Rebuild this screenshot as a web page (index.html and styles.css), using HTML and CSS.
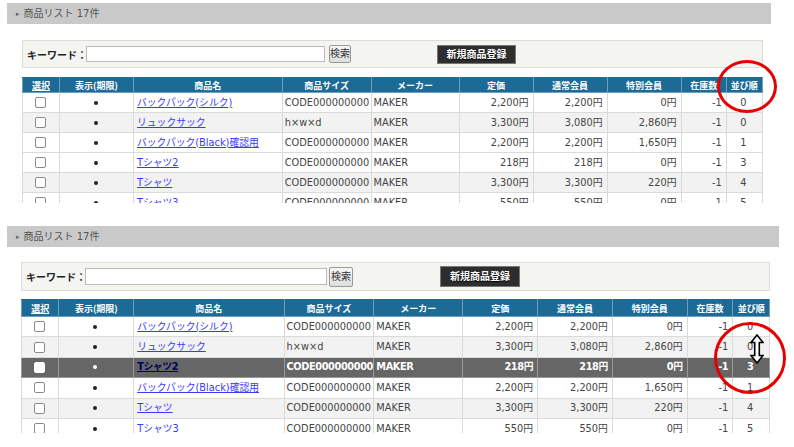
FILE: index.html
```html
<!DOCTYPE html>
<html lang="ja">
<head>
    <meta charset="UTF-8">
    <title>商品リスト</title>
    <link rel="stylesheet" href="styles.css">
</head>
<body>
    <div class="panel panel-a">
        <div class="panel-head"><span class="arrow">▸</span>商品リスト 17件</div>
        <div class="panel-body">
            <div class="search">
                <span class="kw-label">キーワード：</span>
                <span class="kw-input"></span>
                <span class="btn-search">検索</span>
                <span class="btn-new">新規商品登録</span>
            </div>
            <div class="list">
                <table>
                    <colgroup>
                        <col class="c-sel"><col class="c-show"><col class="c-name"><col class="c-size"><col class="c-maker">
                        <col class="c-price"><col class="c-price"><col class="c-price"><col class="c-stock"><col class="c-order">
                    </colgroup>
                    <thead>
                        <tr>
                            <th><u>選択</u></th><th>表示(期限)</th><th>商品名</th><th>商品サイズ</th><th>メーカー</th>
                            <th>定価</th><th>通常会員</th><th>特別会員</th><th>在庫数</th><th>並び順</th>
                        </tr>
                    </thead>
                    <tbody>
                        <tr>
                            <td class="ctr"><span class="check"></span></td><td class="ctr"><span class="dot"></span></td>
                            <td><a href="#">バックパック(シルク)</a></td><td>CODE000000000</td><td>MAKER</td>
                            <td class="num">2,200円</td><td class="num">2,200円</td><td class="num">0円</td><td class="num">-1</td><td class="ctr">0</td>
                        </tr>
                        <tr class="alt">
                            <td class="ctr"><span class="check"></span></td><td class="ctr"><span class="dot"></span></td>
                            <td><a href="#">リュックサック</a></td><td>h×w×d</td><td>MAKER</td>
                            <td class="num">3,300円</td><td class="num">3,080円</td><td class="num">2,860円</td><td class="num">-1</td><td class="ctr">0</td>
                        </tr>
                        <tr>
                            <td class="ctr"><span class="check"></span></td><td class="ctr"><span class="dot"></span></td>
                            <td><a href="#">バックパック(Black)確認用</a></td><td>CODE000000000</td><td>MAKER</td>
                            <td class="num">2,200円</td><td class="num">2,200円</td><td class="num">1,650円</td><td class="num">-1</td><td class="ctr">1</td>
                        </tr>
                        <tr>
                            <td class="ctr"><span class="check"></span></td><td class="ctr"><span class="dot"></span></td>
                            <td><a href="#">Tシャツ2</a></td><td>CODE000000000</td><td>MAKER</td>
                            <td class="num">218円</td><td class="num">218円</td><td class="num">0円</td><td class="num">-1</td><td class="ctr">3</td>
                        </tr>
                        <tr class="alt">
                            <td class="ctr"><span class="check"></span></td><td class="ctr"><span class="dot"></span></td>
                            <td><a href="#">Tシャツ</a></td><td>CODE000000000</td><td>MAKER</td>
                            <td class="num">3,300円</td><td class="num">3,300円</td><td class="num">220円</td><td class="num">-1</td><td class="ctr">4</td>
                        </tr>
                        <tr>
                            <td class="ctr"><span class="check"></span></td><td class="ctr"><span class="dot"></span></td>
                            <td><a href="#">Tシャツ3</a></td><td>CODE000000000</td><td>MAKER</td>
                            <td class="num">550円</td><td class="num">550円</td><td class="num">0円</td><td class="num">-1</td><td class="ctr">5</td>
                        </tr>
                    </tbody>
                </table>
            </div>
        </div>
        <div class="mark mark-a"></div>
    </div>

    <div class="panel panel-b">
        <div class="panel-head"><span class="arrow">▸</span>商品リスト 17件</div>
        <div class="panel-body">
            <div class="search">
                <span class="kw-label">キーワード：</span>
                <span class="kw-input"></span>
                <span class="btn-search">検索</span>
                <span class="btn-new">新規商品登録</span>
            </div>
            <div class="list">
                <table>
                    <colgroup>
                        <col class="c-sel"><col class="c-show"><col class="c-name"><col class="c-size"><col class="c-maker">
                        <col class="c-price"><col class="c-price"><col class="c-price"><col class="c-stock"><col class="c-order">
                    </colgroup>
                    <thead>
                        <tr>
                            <th><u>選択</u></th><th>表示(期限)</th><th>商品名</th><th>商品サイズ</th><th>メーカー</th>
                            <th>定価</th><th>通常会員</th><th>特別会員</th><th>在庫数</th><th>並び順</th>
                        </tr>
                    </thead>
                    <tbody>
                        <tr>
                            <td class="ctr"><span class="check"></span></td><td class="ctr"><span class="dot"></span></td>
                            <td><a href="#">バックパック(シルク)</a></td><td>CODE000000000</td><td>MAKER</td>
                            <td class="num">2,200円</td><td class="num">2,200円</td><td class="num">0円</td><td class="num">-1</td><td class="ctr">0</td>
                        </tr>
                        <tr class="alt">
                            <td class="ctr"><span class="check"></span></td><td class="ctr"><span class="dot"></span></td>
                            <td><a href="#">リュックサック</a></td><td>h×w×d</td><td>MAKER</td>
                            <td class="num">3,300円</td><td class="num">3,080円</td><td class="num">2,860円</td><td class="num">-1</td><td class="ctr">0</td>
                        </tr>
                        <tr class="dragging">
                            <td class="ctr"><span class="check"></span></td><td class="ctr"><span class="dot"></span></td>
                            <td><a href="#">Tシャツ2</a></td><td>CODE000000000</td><td>MAKER</td>
                            <td class="num">218円</td><td class="num">218円</td><td class="num">0円</td><td class="num">-1</td><td class="ctr">3</td>
                        </tr>
                        <tr>
                            <td class="ctr"><span class="check"></span></td><td class="ctr"><span class="dot"></span></td>
                            <td><a href="#">バックパック(Black)確認用</a></td><td>CODE000000000</td><td>MAKER</td>
                            <td class="num">2,200円</td><td class="num">2,200円</td><td class="num">1,650円</td><td class="num">-1</td><td class="ctr">1</td>
                        </tr>
                        <tr class="alt">
                            <td class="ctr"><span class="check"></span></td><td class="ctr"><span class="dot"></span></td>
                            <td><a href="#">Tシャツ</a></td><td>CODE000000000</td><td>MAKER</td>
                            <td class="num">3,300円</td><td class="num">3,300円</td><td class="num">220円</td><td class="num">-1</td><td class="ctr">4</td>
                        </tr>
                        <tr>
                            <td class="ctr"><span class="check"></span></td><td class="ctr"><span class="dot"></span></td>
                            <td><a href="#">Tシャツ3</a></td><td>CODE000000000</td><td>MAKER</td>
                            <td class="num">550円</td><td class="num">550円</td><td class="num">0円</td><td class="num">-1</td><td class="ctr">5</td>
                        </tr>
                    </tbody>
                </table>
            </div>
        </div>
        <div class="mark mark-b"></div>
        <svg class="cursor" width="14" height="30" viewBox="0 0 14 30">
            <path d="M7 1 L13 8.5 L9.3 8.5 L9.3 21.5 L13 21.5 L7 29 L1 21.5 L4.7 21.5 L4.7 8.5 L1 8.5 Z" fill="#fff" stroke="#000" stroke-width="1.6" stroke-linejoin="miter"/>
        </svg>
    </div>
</body>
</html>
```

FILE: styles.css
```css
* {
    margin: 0;
    padding: 0;
    box-sizing: border-box;
}

body {
    font-family: 'DejaVu Sans', 'Noto Sans CJK JP', sans-serif;
    font-size: 10px;
    color: #444;
    background: #fff;
}

.panel {
    position: relative;
    margin-left: 7px;
}

.panel-a {
    width: 764px;
    margin-top: 3px;
}

.panel-b {
    width: 772px;
    margin-top: 23px;
}

.panel-head {
    height: 21px;
    line-height: 21px;
    background: #c9c9c9;
    color: #555;
    font-size: 10px;
    padding-left: 9px;
}

.arrow {
    font-size: 7px;
    color: #666;
    margin-right: 4px;
    vertical-align: 1px;
}

.panel-a .panel-body {
    padding: 16px 8px 0 15px;
}

.panel-b .panel-body {
    padding: 15px 9px 0 14px;
}

.search {
    display: flex;
    align-items: center;
    background: #f4f4f1;
    border: 1px solid #dcdcd8;
    padding-left: 4px;
}

.panel-a .search {
    height: 28px;
}

.panel-b .search {
    height: 29px;
}

.kw-label {
    font-family: 'Noto Sans CJK JP', sans-serif;
    font-size: 10px;
    font-weight: bold;
    color: #222;
    width: 59px;
    flex-shrink: 0;
    white-space: nowrap;
}

.kw-input {
    display: block;
    flex-shrink: 0;
    background: #fff;
    border: 1px solid #bbb;
}

.panel-a .kw-input {
    width: 239px;
    height: 16px;
}

.panel-b .kw-input {
    width: 242px;
    height: 17px;
}

.btn-search {
    display: block;
    flex-shrink: 0;
    margin-left: 4px;
    border: 1px solid #999;
    border-radius: 2px;
    background: linear-gradient(#f6f6f6, #dedede);
    color: #333;
    text-align: center;
    font-size: 10px;
}

.panel-a .btn-search {
    width: 22px;
    height: 18px;
    line-height: 16px;
}

.panel-b .btn-search {
    margin-left: 2px;
    width: 24px;
    height: 20px;
    line-height: 18px;
}

.btn-new {
    display: block;
    flex-shrink: 0;
    background: #2e2e2e;
    border: 1px solid #777;
    color: #fff;
    font-weight: bold;
    text-align: center;
    text-shadow: 0 1px 1px #000;
}

.panel-a .btn-new {
    margin-left: 86px;
    width: 79px;
    height: 19px;
    line-height: 17px;
}

.panel-b .btn-new {
    margin-left: 87px;
    width: 80px;
    height: 21px;
    line-height: 19px;
}

.list {
    overflow: hidden;
}

.panel-a .list {
    margin-top: 9px;
    height: 126px;
}

.panel-b .list {
    margin-top: 8px;
    height: 134px;
}

table {
    width: 100%;
    border-collapse: collapse;
    table-layout: fixed;
}

.c-sel { width: 5%; }
.c-show { width: 10%; }
.c-name { width: 20.1%; }
.c-size { width: 12%; }
.c-maker { width: 11.9%; }
.c-price { width: 10%; }
.c-stock { width: 6.1%; }
.c-order { width: 4.9%; }

th {
    background: #1c6b97;
    color: #fff;
    font-family: 'Noto Sans CJK JP', sans-serif;
    font-size: 9px;
    font-weight: bold;
    border: 1px solid #6e9fbd;
    border-top-color: #1c6b97;
    white-space: nowrap;
    overflow: hidden;
}

.panel-a th {
    height: 15px;
    line-height: 13px;
}

.panel-b th {
    height: 17px;
    line-height: 15px;
}

td {
    border: 1px solid #dadada;
    padding: 0 4px 0 2px;
    height: 20px;
    line-height: 18px;
    font-size: 9.8px;
    white-space: nowrap;
    overflow: hidden;
    background: #fff;
}

td:nth-child(3) {
    padding-left: 3px;
}

.panel-b td {
    height: 20.4px;
}

tr.alt td {
    background: #f2f2f2;
}

td a {
    color: #3a3aff;
}

.ctr {
    text-align: center;
}

.num {
    text-align: right;
}

.check {
    display: inline-block;
    width: 11px;
    height: 11px;
    border: 1px solid #8a8a8a;
    border-radius: 2px;
    background: #fff;
    vertical-align: middle;
}

.dot {
    display: inline-block;
    width: 4px;
    height: 4px;
    border-radius: 50%;
    background: #222;
    vertical-align: middle;
}

tr.dragging td {
    background: #666;
    color: #fff;
    font-weight: bold;
    letter-spacing: -0.4px;
    border-color: #999;
}

tr.dragging td a {
    color: #00005e;
}

tr.dragging .check {
    border-color: #fff;
}

tr.dragging .dot {
    background: #fff;
}

.mark {
    position: absolute;
    border: 3px solid #e60000;
    border-radius: 50%;
}

.mark-a {
    left: 710px;
    top: 57px;
    width: 60px;
    height: 53px;
}

.mark-b {
    left: 707px;
    top: 96px;
    width: 72px;
    height: 72px;
}

.cursor {
    position: absolute;
    left: 743px;
    top: 108px;
}
```
